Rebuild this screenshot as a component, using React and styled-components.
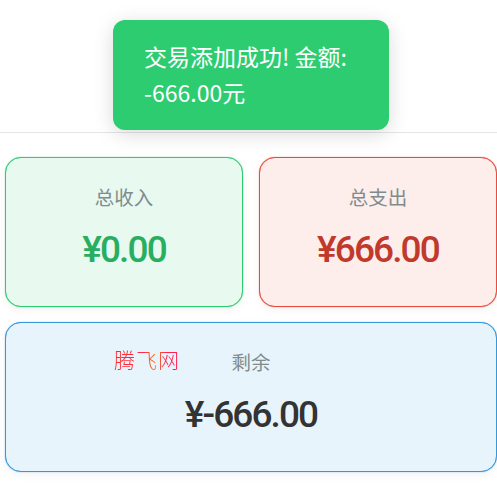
import React from 'react';
import styled, { createGlobalStyle } from 'styled-components';

const GlobalStyle = createGlobalStyle`
  html, body {
    margin: 0;
    padding: 0;
    background: #fff;
    font-family: 'Noto Sans CJK SC', 'Noto Sans', sans-serif;
  }
`;

const Page = styled.div`
  position: relative;
  width: 497px;
  height: 495px;
  overflow: hidden;
`;

const Header = styled.div`
  height: 132px;
  border-bottom: 1px solid #e6e6e6;
`;

const Toast = styled.div`
  position: absolute;
  top: 20px;
  left: 113px;
  width: 276px;
  height: 110px;
  box-sizing: border-box;
  padding: 18px 31px;
  background: #2ecc71;
  border-radius: 12px;
  box-shadow: 0 4px 20px rgba(0, 0, 0, 0.15);
  color: #fff;
  font-size: 23px;
  line-height: 36px;
`;

const Cards = styled.div`
  display: grid;
  grid-template-columns: 1fr 1fr;
  gap: 15px 16px;
  padding: 24px 0 0 5px;
`;

const Card = styled.div`
  grid-column: ${(p) => (p.$wide ? '1 / span 2' : 'auto')};
  position: relative;
  height: 150px;
  box-sizing: border-box;
  padding-top: 26px;
  text-align: center;
  background: ${(p) => p.$bg};
  border: 1px solid ${(p) => p.$line};
  border-radius: 16px;
  box-shadow: 0 0 1px ${(p) => p.$line}, 0 3px 10px rgba(0, 0, 0, 0.05);
`;

const Label = styled.div`
  color: #7f8c8d;
  font-size: 19.5px;
  line-height: 26px;
`;

const Amount = styled.div`
  margin-top: 16px;
  color: ${(p) => p.$color};
  font-family: 'Roboto', sans-serif;
  font-size: 37px;
  font-weight: 500;
  line-height: 48px;
  letter-spacing: -1.9px;
`;

const Watermark = styled.div`
  position: absolute;
  top: 22px;
  left: 108px;
  font-size: 21px;
  font-weight: 300;
  line-height: 28px;
  letter-spacing: 1px;
  background: linear-gradient(90deg, #ff2a2a, #ff2a4a 45%, #f08020 62%, #ff2050 80%);
  -webkit-background-clip: text;
  background-clip: text;
  color: transparent;
`;

export default function App() {
  return (
    <Page>
      <GlobalStyle />
      <Header />
      <Toast>
        交易添加成功! 金额:
        <br />
        -666.00元
      </Toast>
      <Cards>
        <Card $bg='#e8f9f0' $line='#2ecc71'>
          <Label>总收入</Label>
          <Amount $color='#27ae60'>¥0.00</Amount>
        </Card>
        <Card $bg='#fdedeb' $line='#e74c3c'>
          <Label>总支出</Label>
          <Amount $color='#c0392b'>¥666.00</Amount>
        </Card>
        <Card $wide $bg='#e8f4fb' $line='#3498db'>
          <Watermark>腾飞网</Watermark>
          <Label>剩余</Label>
          <Amount $color='#333333'>¥-666.00</Amount>
        </Card>
      </Cards>
    </Page>
  );
}
